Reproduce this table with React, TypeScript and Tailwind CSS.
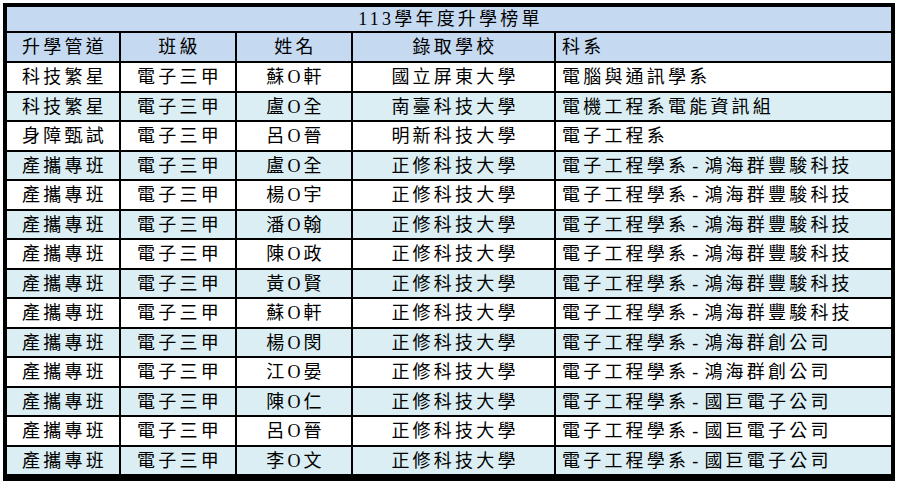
type Row = {
  route: string;  // 升學管道
  cls: string;    // 班級
  name: string;   // 姓名
  school: string; // 錄取學校
  dept: string;   // 科系
};

const ROWS: Row[] = [
  { route: "科技繁星", cls: "電子三甲", name: "蘇O軒", school: "國立屏東大學", dept: "電腦與通訊學系" },
  { route: "科技繁星", cls: "電子三甲", name: "盧O全", school: "南臺科技大學", dept: "電機工程系電能資訊組" },
  { route: "身障甄試", cls: "電子三甲", name: "呂O晉", school: "明新科技大學", dept: "電子工程系" },
  { route: "產攜專班", cls: "電子三甲", name: "盧O全", school: "正修科技大學", dept: "電子工程學系-鴻海群豐駿科技" },
  { route: "產攜專班", cls: "電子三甲", name: "楊O宇", school: "正修科技大學", dept: "電子工程學系-鴻海群豐駿科技" },
  { route: "產攜專班", cls: "電子三甲", name: "潘O翰", school: "正修科技大學", dept: "電子工程學系-鴻海群豐駿科技" },
  { route: "產攜專班", cls: "電子三甲", name: "陳O政", school: "正修科技大學", dept: "電子工程學系-鴻海群豐駿科技" },
  { route: "產攜專班", cls: "電子三甲", name: "黃O賢", school: "正修科技大學", dept: "電子工程學系-鴻海群豐駿科技" },
  { route: "產攜專班", cls: "電子三甲", name: "蘇O軒", school: "正修科技大學", dept: "電子工程學系-鴻海群豐駿科技" },
  { route: "產攜專班", cls: "電子三甲", name: "楊O閔", school: "正修科技大學", dept: "電子工程學系-鴻海群創公司" },
  { route: "產攜專班", cls: "電子三甲", name: "江O晏", school: "正修科技大學", dept: "電子工程學系-鴻海群創公司" },
  { route: "產攜專班", cls: "電子三甲", name: "陳O仁", school: "正修科技大學", dept: "電子工程學系-國巨電子公司" },
  { route: "產攜專班", cls: "電子三甲", name: "呂O晉", school: "正修科技大學", dept: "電子工程學系-國巨電子公司" },
  { route: "產攜專班", cls: "電子三甲", name: "李O文", school: "正修科技大學", dept: "電子工程學系-國巨電子公司" },
];

const HEADERS = ["升學管道", "班級", "姓名", "錄取學校"];

// centered cells get a little left padding to offset the trailing letter-spacing
const center = "flex items-center justify-center pl-[3px]";
const left = "flex items-center justify-start pl-[6px]";

// the dash in the source font is wider than Liberation's hyphen
function Dept({ text }: { text: string }) {
  const [a, b] = text.split("-");
  if (b === undefined) return <>{text}</>;
  return (
    <>
      {a}
      <span className="px-[3px]">-</span>
      {b}
    </>
  );
}

export default function App() {
  return (
    <div
      className="w-[897px] h-[481px] bg-white text-black text-[18px] tracking-[3.2px] leading-none"
      style={{ fontFamily: '"Liberation Serif", "Noto Sans CJK TC", serif' }}
    >
      <div className="ml-[3px] mt-[3px] w-[892px] border-x-4 border-t-4 border-b-[7px] border-black bg-black grid gap-[2px] grid-cols-[112px_114px_114px_201px_335px] grid-rows-[24px_28px_28px_27px_28px_27px_28px_27px_28px_27px_28px_27px_28px_27px_28px_27px]">
        <div className={`col-span-5 bg-[#c5d9f1] ${center}`}>113學年度升學榜單</div>

        {HEADERS.map((h) => (
          <div key={h} className={`bg-[#c5d9f1] ${center}`}>
            {h}
          </div>
        ))}
        <div className={`bg-[#c5d9f1] ${left}`}>科系</div>

        {ROWS.map((r, i) => {
          const bg = i % 2 === 1 ? "bg-[#daeef3]" : "bg-white";
          return [
            <div key={`a${i}`} className={`${bg} ${center}`}>{r.route}</div>,
            <div key={`b${i}`} className={`${bg} ${center}`}>{r.cls}</div>,
            <div key={`c${i}`} className={`${bg} ${center}`}>{r.name}</div>,
            <div key={`d${i}`} className={`${bg} ${center}`}>{r.school}</div>,
            <div key={`e${i}`} className={`${bg} ${left}`}>
              <Dept text={r.dept} />
            </div>,
          ];
        })}
      </div>
    </div>
  );
}
